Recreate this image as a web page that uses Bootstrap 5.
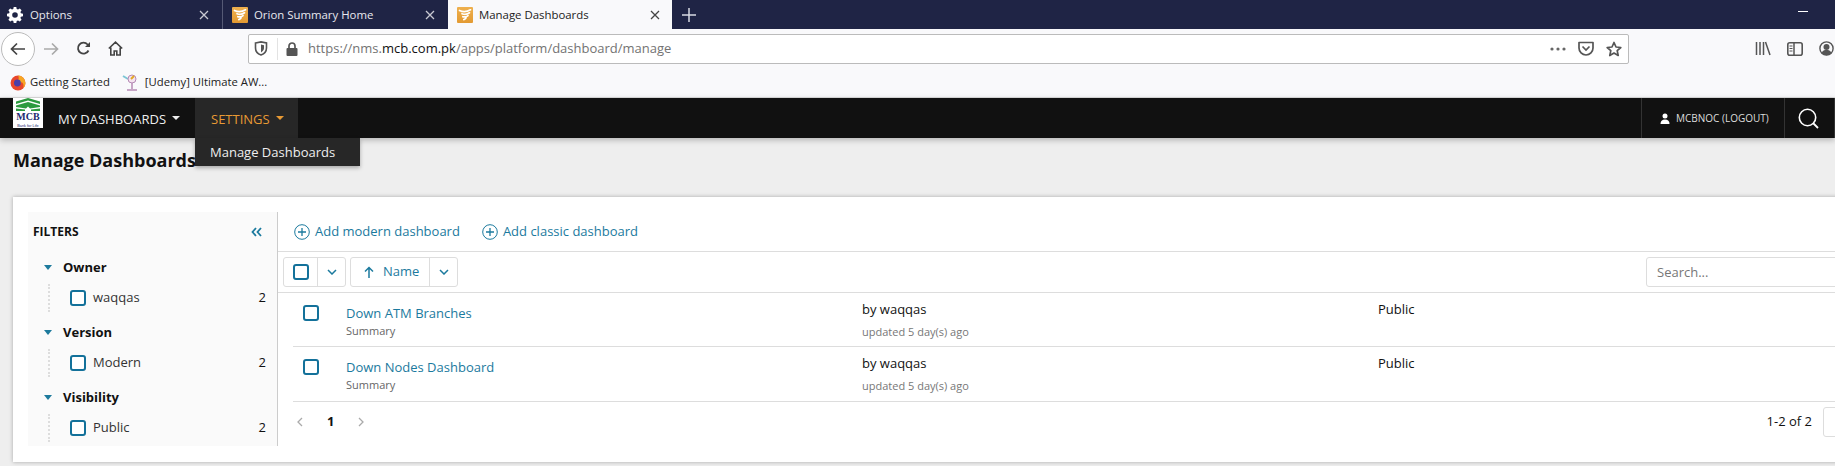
<!DOCTYPE html>
<html lang="en">
<head>
<meta charset="utf-8">
<title>Manage Dashboards</title>
<link rel="stylesheet" href="https://cdn.jsdelivr.net/npm/bootstrap@5.3.0/dist/css/bootstrap.min.css">
<style>
html,body{height:466px;overflow:hidden;background:#eee;}
body{font-family:"Open Sans","Noto Sans",sans-serif;font-size:13px;color:#111;}
.tabstrip{height:29px;background:#1f2445;color:#e8e8ee;font-size:11.4px;}
.tabx{height:29px;flex:none;}
.tab-a{width:223px;border-right:1px solid #555a75;padding:0 13px 0 7px;gap:7px;}
.tab-b{width:225px;padding:0 13px 0 9px;gap:6px;}
.tab-c{width:224px;background:#f9f9fb;color:#222;padding:0 12px 0 9px;gap:6px;}
.tab-close{margin-left:auto;}
.newtab{width:34px;}
.winmin{margin-left:auto;margin-right:27px;width:10px;height:1px;background:#fff;position:relative;top:-3px;}
.toolrow{height:39px;background:#f9f9fb;padding-left:1px;}
.backcirc{width:34px;height:34px;border:1px solid #bbb;border-radius:50%;background:#fff;}
.tbtn{width:32px;}
.urlbar{margin-left:117px;width:1381px;height:30px;background:#fff;border:1px solid #bbb;border-radius:2px;font-size:13px;color:#737373;padding-left:5px;padding-right:6px;}
.urlsep{width:1px;height:22px;background:#e3e3e3;margin:0 8px 0 9px;}
.urllock{margin-right:10px;}
.urlhost{color:#111;}
.urlicons{margin-left:auto;gap:12px;}
.tright{margin-left:auto;gap:16px;margin-right:1px;}
.bookrow{height:30px;background:#f9f9fb;border-bottom:1px solid #ddd;font-size:11.3px;color:#222;padding-left:10px;}
.ffico{margin-right:4px;}
.udico{margin-left:12px;margin-right:5px;}
.mainbar{height:40px;background:#111;color:#eee;box-shadow:0 2px 6px rgba(0,0,0,.25);position:relative;}
.logoimg{width:30px;height:30px;margin-left:13px;background:#fff;margin-bottom:10px;display:block;flex:none;}
.navitem{font-size:13px;height:40px;padding-top:3px;}
.navfirst{padding-left:15px;width:152px;}
.navset{background:#272727;color:#e89a34;width:103px;padding-left:16px;}
.caretd{width:0;height:0;border-left:4px solid transparent;border-right:4px solid transparent;border-top:4px solid currentColor;margin-left:6px;position:relative;top:-2px;}
.userbox{margin-left:auto;width:144px;height:40px;border-left:1px solid #333;border-right:1px solid #333;font-size:10px;padding-left:18px;gap:6px;color:#ddd;}
.searchbox{width:50px;height:40px;border-right:1px solid #333;padding-left:13px;}
.subdrop{position:absolute;left:195px;top:40px;width:165px;height:28px;background:#272727;color:#eee;font-size:13px;padding-left:15px;padding-top:1px;z-index:5;box-shadow:0 2px 4px rgba(0,0,0,.3);}
.pagehead{height:59px;padding:10px 0 0 13px;font-size:18px;font-weight:700;color:#111;line-height:24px;margin:0;}
.pagebox{margin-left:13px;width:1840px;height:265px;background:#fff;box-shadow:0 0 4px rgba(0,0,0,.3);padding:15px 0 0 15px;}
.filterpane{width:250px;height:234px;background:#fafafa;border-right:1px solid #ccc;padding:0 6px 0 5px;flex:none;}
.filterhead{height:40px;margin-bottom:4px;font-size:12px;font-weight:700;}
.dblchev{margin-left:auto;margin-right:9px;}
.grouphead{height:22px;font-weight:700;font-size:13px;padding-left:11px;gap:11px;padding-top:1px;}
.tri{width:0;height:0;border-left:4px solid transparent;border-right:4px solid transparent;border-top:5px solid #1d7a9c;}
.grouprow{height:43px;margin-left:15px;padding-bottom:3px;}
.dotline{border-left:2px dotted #ddd;height:28px;margin-right:20px;}
.boxcheck{width:16px;height:16px;border:2px solid #13719a;border-radius:3px;background:#fff;flex:none;display:block;}
.grouplbl{margin-left:7px;color:#333;}
.groupnum{margin-left:auto;margin-right:5px;}
.listpane{flex:1 1 auto;min-width:0;}
.addrow{height:40px;border-bottom:1px solid #ddd;color:#1b7a9e;font-size:13px;padding-left:16px;}
.addlink{gap:5px;margin-right:22px;}
.toolrow2{height:41px;border-bottom:1px solid #ddd;padding-left:5px;}
.btnset{height:30px;border:1px solid #ddd;border-radius:3px;background:#fff;color:#1b7a9e;margin-right:4px;}
.btncell{height:28px;}
.cellbox{width:34px;border-right:1px solid #ddd;}
.cellchev{width:27px;}
.cellname{width:79px;border-right:1px solid #ddd;gap:9px;padding-left:13px;font-size:13px;}
.searchinp{width:223px;height:30px;border:1px solid #ddd;border-radius:3px;padding-left:10px;padding-top:1px;color:#777;font-size:13px;margin-left:auto;margin-right:-16px;}
.listrow{height:54px;border-bottom:1px solid #ddd;margin-left:15px;}
.listrow-tall{height:55px;}
.rowcheck{width:53px;padding:12px 0 0 10px;flex:none;}
.rowname{width:516px;flex:none;padding-top:11px;}
.rowlink{color:#1b7a9e;font-size:13px;line-height:18px;}
.rowsmall{font-size:11px;color:#666;line-height:16px;margin-top:1px;}
.rowowner{width:516px;flex:none;padding-top:7px;}
.rowby{line-height:18px;}
.rowupd{font-size:11px;color:#777;line-height:16px;margin-top:6px;}
.rowvis{padding-top:7px;line-height:18px;}
.pagerrow{height:40px;padding-left:19px;font-size:13px;}
.pagenum{font-weight:700;margin:0 24px;}
.pagecount{margin-left:auto;}
.pagesel{width:60px;height:30px;border:1px solid #ddd;border-radius:3px;margin-left:11px;margin-right:-30px;}
</style>
</head>
<body>
<svg width="0" height="0" class="d-block position-absolute">
  <defs>
    <linearGradient id="favgrad" x1="0" y1="0" x2="0" y2="1"><stop offset="0" stop-color="#eeb04e"/><stop offset="1" stop-color="#e39a32"/></linearGradient>
    <symbol id="favicon" viewBox="0 0 16 16">
      <rect width="16" height="16" rx="1" fill="url(#favgrad)"/>
      <path d="M2.500 3.500Q8 6 13.500 2.800M5 6.700Q9 8.300 12.500 5.800M5.800 9.700Q8.500 10.600 11 8.600M6.800 12.600Q8 12.300 9 11" fill="none" stroke="#fff" stroke-width="1.700" stroke-linecap="round"/>
    </symbol>
  </defs>
</svg>
<div class="tabstrip d-flex align-items-center">
  <div class="tabx tab-a d-flex align-items-center">
    <svg width="16" height="16" viewBox="0 0 16 16"><path fill="#fff" d="M6.700 0h2.600l.4 2.100 1.300.5L12.800 1.400l1.800 1.800-1.200 1.800.5 1.300 2.100.4v2.600l-2.100.4-.5 1.300 1.200 1.800-1.800 1.800-1.800-1.200-1.300.5-.4 2.100H6.700l-.4-2.100-1.300-.5-1.800 1.200-1.800-1.800 1.200-1.800-.5-1.300L0 9.300V6.700l2.100-.4.5-1.300-1.200-1.800 1.800-1.800L5 2.600l1.300-.5zM8 5.200a2.800 2.800 0 1 0 0 5.600 2.800 2.800 0 0 0 0-5.600z"/></svg>
    <span>Options</span>
    <svg class="tab-close" width="10" height="10" viewBox="0 0 10 10"><path d="M1 1l8 8M9 1l-8 8" stroke="#c8c9d2" stroke-width="1.300"/></svg>
  </div>
  <div class="tabx tab-b d-flex align-items-center">
    <svg width="16" height="16"><use href="#favicon"/></svg>
    <span>Orion Summary Home</span>
    <svg class="tab-close" width="10" height="10" viewBox="0 0 10 10"><path d="M1 1l8 8M9 1l-8 8" stroke="#c8c9d2" stroke-width="1.300"/></svg>
  </div>
  <div class="tabx tab-c d-flex align-items-center">
    <svg width="16" height="16"><use href="#favicon"/></svg>
    <span>Manage Dashboards</span>
    <svg class="tab-close" width="10" height="10" viewBox="0 0 10 10"><path d="M1 1l8 8M9 1l-8 8" stroke="#444" stroke-width="1.300"/></svg>
  </div>
  <div class="newtab d-flex justify-content-center">
    <svg width="14" height="14" viewBox="0 0 14 14"><path d="M7 0v14M0 7h14" stroke="#d8d9e2" stroke-width="1.500"/></svg>
  </div>
  <div class="winmin"></div>
</div>
<div class="toolrow d-flex align-items-center">
  <div class="backcirc d-flex align-items-center justify-content-center">
    <svg width="16" height="14" viewBox="0 0 16 14"><path d="M15 7H2M7 1.500 1.500 7 7 12.500" fill="none" stroke="#444" stroke-width="1.700"/></svg>
  </div>
  <div class="tbtn d-flex justify-content-center"><svg width="16" height="14" viewBox="0 0 16 14"><path d="M1 7h13M9 1.500 14.500 7 9 12.500" fill="none" stroke="#aaa" stroke-width="1.700"/></svg></div>
  <div class="tbtn d-flex justify-content-center"><svg width="15" height="15" viewBox="0 0 15 15"><path d="M12.500 9.500A5.500 5.500 0 1 1 11.600 3.500L13.500 5.500" fill="none" stroke="#444" stroke-width="1.800"/><path d="M14 1v5H9z" fill="#444"/></svg></div>
  <div class="tbtn d-flex justify-content-center"><svg width="15" height="15" viewBox="0 0 15 15"><path d="M.8 7.500 7.500 1.200l6.700 6.300M2.800 6.500V14h3.400v-4h2.600v4h3.400V6.500" fill="none" stroke="#444" stroke-width="1.600"/></svg></div>
  <div class="urlbar d-flex align-items-center">
    <svg width="14" height="15" viewBox="0 0 14 15"><path d="M1.500 2 7 .9 12.500 2v5c0 3.500-2.500 6-5.500 7C4 13 1.500 10.500 1.500 7z" fill="none" stroke="#555" stroke-width="1.600"/><path d="M7 3.500 10 4.200V7c0 2-1.300 3.500-3 4.400z" fill="#555"/></svg>
    <span class="urlsep"></span>
    <svg width="12" height="14" viewBox="0 0 12 14" class="urllock"><path d="M3 6V4a3 3 0 0 1 6 0v2" fill="none" stroke="#555" stroke-width="1.700"/><rect x="0.500" y="6" width="11" height="8" rx="1" fill="#555"/></svg>
    <span>https://nms.<span class="urlhost">mcb.com.pk</span>/apps/platform/dashboard/manage</span>
    <span class="urlicons d-flex align-items-center">
      <svg width="16" height="4" viewBox="0 0 16 4"><circle cx="2" cy="2" r="1.600" fill="#666"/><circle cx="8" cy="2" r="1.600" fill="#666"/><circle cx="14" cy="2" r="1.600" fill="#666"/></svg>
      <svg width="16" height="15" viewBox="0 0 16 15"><path d="M1 1.500h14V7a7 7 0 0 1-14 0z" fill="none" stroke="#555" stroke-width="1.700" stroke-linejoin="round"/><path d="M4.500 5.500 8 9l3.500-3.500" fill="none" stroke="#555" stroke-width="1.700"/></svg>
      <svg width="16" height="16" viewBox="0 0 16 16"><path d="M8 1.500l2 4.500 4.800.5-3.600 3.200 1 4.800L8 12.100 3.800 14.500l1-4.800L1.200 6.500 6 6z" fill="none" stroke="#555" stroke-width="1.700" stroke-linejoin="round"/></svg>
    </span>
  </div>
  <div class="tright d-flex align-items-center">
    <svg width="16" height="15" viewBox="0 0 16 15"><path d="M1.500 1v13M5 1v13M8.500 1v13M10.500 1l4.500 13" stroke="#555" stroke-width="1.500" fill="none"/></svg>
    <svg width="16" height="14" viewBox="0 0 16 14"><rect x=".8" y=".8" width="14.400" height="12.400" rx="2" fill="none" stroke="#555" stroke-width="1.600"/><path d="M7 1v12" stroke="#555" stroke-width="1.500"/><path d="M2.500 4h3M2.500 6.500h3M2.500 9h3" stroke="#555"/></svg>
    <svg width="15" height="15" viewBox="0 0 15 15"><circle cx="7.500" cy="7.500" r="6.600" fill="none" stroke="#555" stroke-width="1.400"/><circle cx="7.500" cy="6" r="3" fill="#555"/><path d="M2.500 12c1-2.500 3-3 5-3s4 .5 5 3a6.500 6.500 0 0 1-10 0z" fill="#555"/></svg>
  </div>
</div>
<div class="bookrow d-flex align-items-center">
  <svg width="16" height="16" viewBox="0 0 14 14" class="ffico"><circle cx="7" cy="7" r="6.500" fill="#e8472c"/><path d="M7 .5a6.500 6.500 0 0 1 6.500 6.500c0 2-1 3.500-2 4.500 .8-2 .3-4.500-1.500-5.500.3 1.500-1 2-2 2S6 7 6.500 6 8.500 3 7 .5z" fill="#f6a623"/><circle cx="6.500" cy="7" r="3" fill="#4a3ea8"/></svg>
  <span>Getting Started</span>
  <svg width="18" height="17" viewBox="0 0 18 17" class="udico"><path d="M1 2l5 3" stroke="#7dc6d6" stroke-width="2"/><circle cx="10" cy="5" r="4" fill="#f4e3ee" stroke="#b58ab5"/><path d="M9 5l3-3" stroke="#e2a820" stroke-width="2"/><path d="M10 9v6M5 16h10" stroke="#b78ab5" stroke-width="1.500"/></svg>
  <span>[Udemy] Ultimate AW...</span>
</div>
<div class="mainbar d-flex align-items-center">
  <svg class="logoimg" viewBox="0 0 30 30">
    <rect width="30" height="30" fill="#fff"/>
    <path d="M3 3.500 15 0l12 3.500V6L15 2.500 3 6zM3 7.500 15 4l12 3.500V9l-10 1.500-2-2-2 2L3 9zM3 10.500l9 1V13H3zM27 10.500l-9 1V13h9z" fill="#2c9a3e"/>
    <text x="15" y="22" text-anchor="middle" font-size="10" font-weight="700" font-family="Liberation Serif, serif" fill="#222a70">MCB</text>
    <text x="15" y="28.500" text-anchor="middle" font-size="3.800" font-family="Liberation Sans, sans-serif" fill="#222a70">Bank for Life</text>
  </svg>
  <div class="navitem navfirst d-flex align-items-center">MY DASHBOARDS<span class="caretd"></span></div>
  <div class="navitem navset d-flex align-items-center">SETTINGS<span class="caretd"></span></div>
  <div class="subdrop d-flex align-items-center">Manage Dashboards</div>
  <div class="userbox d-flex align-items-center">
    <svg width="10" height="11" viewBox="0 0 10 11"><circle cx="5" cy="3" r="2.500" fill="#fff"/><path d="M.5 11c0-3 1.500-4.500 4.500-4.500S9.500 8 9.500 11z" fill="#fff"/></svg>
    <span>MCBNOC (LOGOUT)</span>
  </div>
  <div class="searchbox d-flex align-items-center">
    <svg width="21" height="21" viewBox="0 0 21 21"><circle cx="9.500" cy="9.500" r="8.200" fill="none" stroke="#fff" stroke-width="1.600"/><path d="M15 15l5 5" stroke="#fff" stroke-width="1.800"/></svg>
  </div>
</div>
<h1 class="pagehead">Manage Dashboards</h1>
<div class="pagebox d-flex">
  <div class="filterpane">
    <div class="filterhead d-flex align-items-center">FILTERS
      <svg class="dblchev" width="11" height="10" viewBox="0 0 11 10"><path d="M5 1 1.500 5 5 9M10 1 6.500 5 10 9" fill="none" stroke="#1b7a9e" stroke-width="1.800"/></svg>
    </div>
    <div class="grouphead d-flex align-items-center"><span class="tri"></span>Owner</div>
    <div class="grouprow d-flex align-items-center"><span class="dotline"></span><span class="boxcheck"></span><span class="grouplbl">waqqas</span><span class="groupnum">2</span></div>
    <div class="grouphead d-flex align-items-center"><span class="tri"></span>Version</div>
    <div class="grouprow d-flex align-items-center"><span class="dotline"></span><span class="boxcheck"></span><span class="grouplbl">Modern</span><span class="groupnum">2</span></div>
    <div class="grouphead d-flex align-items-center"><span class="tri"></span>Visibility</div>
    <div class="grouprow d-flex align-items-center"><span class="dotline"></span><span class="boxcheck"></span><span class="grouplbl">Public</span><span class="groupnum">2</span></div>
  </div>
  <div class="listpane">
    <div class="addrow d-flex align-items-center">
      <span class="addlink d-flex align-items-center"><svg width="16" height="16" viewBox="0 0 16 16"><circle cx="8" cy="8" r="7.300" fill="none" stroke="#1b7a9e"/><path d="M8 4v8M4 8h8" stroke="#1b7a9e" stroke-width="1.300"/></svg>Add modern dashboard</span>
      <span class="addlink d-flex align-items-center"><svg width="16" height="16" viewBox="0 0 16 16"><circle cx="8" cy="8" r="7.300" fill="none" stroke="#1b7a9e"/><path d="M8 4v8M4 8h8" stroke="#1b7a9e" stroke-width="1.300"/></svg>Add classic dashboard</span>
    </div>
    <div class="toolrow2 d-flex align-items-center">
      <div class="btnset d-flex align-items-center">
        <div class="btncell cellbox d-flex align-items-center justify-content-center"><span class="boxcheck"></span></div>
        <div class="btncell cellchev d-flex align-items-center justify-content-center"><svg width="10" height="6" viewBox="0 0 10 6"><path d="M1 1l4 4 4-4" fill="none" stroke="#1b7a9e" stroke-width="1.500"/></svg></div>
      </div>
      <div class="btnset d-flex align-items-center">
        <div class="btncell cellname d-flex align-items-center"><svg width="10" height="12" viewBox="0 0 10 12"><path d="M5 12V1.500M1 5.500l4-4 4 4" fill="none" stroke="#1b7a9e" stroke-width="1.500"/></svg>Name</div>
        <div class="btncell cellchev d-flex align-items-center justify-content-center"><svg width="10" height="6" viewBox="0 0 10 6"><path d="M1 1l4 4 4-4" fill="none" stroke="#1b7a9e" stroke-width="1.500"/></svg></div>
      </div>
      <div class="searchinp d-flex align-items-center">Search...</div>
    </div>
    <div class="listrow d-flex">
      <div class="rowcheck"><span class="boxcheck"></span></div>
      <div class="rowname"><div class="rowlink">Down ATM Branches</div><div class="rowsmall">Summary</div></div>
      <div class="rowowner"><div class="rowby">by waqqas</div><div class="rowupd">updated 5 day(s) ago</div></div>
      <div class="rowvis">Public</div>
    </div>
    <div class="listrow listrow-tall d-flex">
      <div class="rowcheck"><span class="boxcheck"></span></div>
      <div class="rowname"><div class="rowlink">Down Nodes Dashboard</div><div class="rowsmall">Summary</div></div>
      <div class="rowowner"><div class="rowby">by waqqas</div><div class="rowupd">updated 5 day(s) ago</div></div>
      <div class="rowvis">Public</div>
    </div>
    <div class="pagerrow d-flex align-items-center">
      <svg width="6" height="10" viewBox="0 0 6 10"><path d="M5 1 1 5l4 4" fill="none" stroke="#aaa" stroke-width="1.300"/></svg>
      <span class="pagenum">1</span>
      <svg width="6" height="10" viewBox="0 0 6 10"><path d="M1 1l4 4-4 4" fill="none" stroke="#aaa" stroke-width="1.300"/></svg>
      <span class="pagecount">1-2 of 2</span><span class="pagesel"></span>
    </div>
  </div>
</div>
<script src="https://cdn.jsdelivr.net/npm/bootstrap@5.3.0/dist/js/bootstrap.bundle.min.js"></script>
</body>
</html>
